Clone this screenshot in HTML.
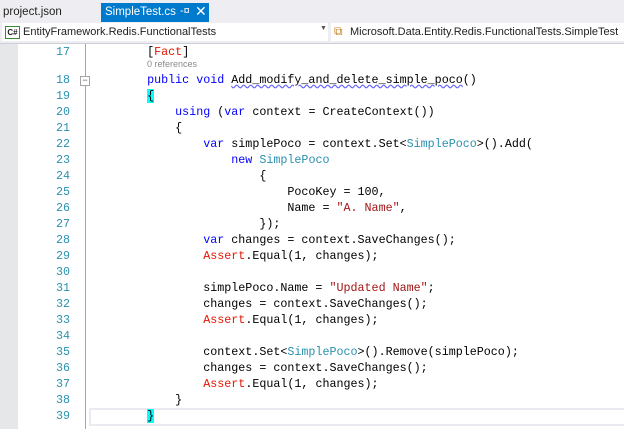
<!DOCTYPE html>
<html><head><style>
body{margin:0;width:624px;height:429px;overflow:hidden;background:#fff;font-family:"Liberation Sans",sans-serif;position:relative}
.tabs{position:absolute;left:0;top:0;width:624px;height:22px;background:#eeeef2}
.tab1{position:absolute;left:3px;top:6px;font-size:11.5px;color:#1e1e1e}
.tab2{position:absolute;left:101px;top:3px;width:108px;height:19px;background:#007acc;color:#fff;font-size:11.5px}
.nav{position:absolute;left:0;top:22px;width:624px;height:21px;background:#eeeef2;border-bottom:1px solid #ccced8}
.box{position:absolute;top:1px;height:18px;background:#fff;font-size:11px;color:#1e1e1e}
.gut{position:absolute;left:0;top:44px;width:18px;height:385px;background:#e6e7e8}
.vl{position:absolute;left:85px;top:44px;width:1px;height:385px;background:#a5a5a5}
.ln{position:absolute;left:30px;width:40px;text-align:right;font:11.7px "Liberation Mono",monospace;color:#2b91af;line-height:16px}
.c{position:absolute;left:91px;font:11.7px "Liberation Mono",monospace;color:#000;line-height:16px;white-space:pre}
.k{color:#0000ff}.t{color:#2b91af}.r{color:#e51400}.s{color:#a31515}
.cur{position:absolute;left:89px;top:408px;width:540px;height:14px;border:2px solid #eaeaf2}
</style></head><body>
<div class="tabs">
<div class="tab1">project.json</div>
<div class="tab2"><span style="position:absolute;left:4px;top:3px">SimpleTest.cs</span><span style="position:absolute;left:79px;top:2px;font-size:11px">-¤</span><span style="position:absolute;left:94px;top:0px;font-size:14px">✕</span></div>
</div>
<div class="nav">
<div class="box" style="left:2px;width:326px"><span style="position:absolute;left:3px;top:3px;width:13px;height:11px;border:1px solid #388a34;font-size:8px;line-height:11px;text-align:center;font-weight:bold">C#</span><span style="position:absolute;left:21px;top:3px">EntityFramework.Redis.FunctionalTests</span><span style="position:absolute;left:318px;top:2px;font-size:7px;color:#555">▼</span></div>
<div class="box" style="left:331px;width:293px"><span style="position:absolute;left:3px;top:1px;color:#c57d1f;font-size:12px">⧉</span><span style="position:absolute;left:19px;top:3px">Microsoft.Data.Entity.Redis.FunctionalTests.SimpleTest</span></div>
</div>
<div class="gut"></div>
<div class="vl"></div>
<div class="cur"></div>
<div class="ln" style="top:44px">17</div>
<div class="c" style="top:44px">        [<span class="r">Fact</span>]</div>
<div class="c" style="top:59px;left:147px;font:9px 'Liberation Sans',sans-serif;color:#8a8a8a">0 references</div>
<div style="position:absolute;left:80px;top:76px;width:8px;height:8px;border:1px solid #a5a5a5;background:#fff;font-size:9px;line-height:7px;text-align:center;color:#555">−</div>
<div class="ln" style="top:72px;line-height:16px">18<br>19<br>20<br>21<br>22<br>23<br>24<br>25<br>26<br>27<br>28<br>29<br>30<br>31<br>32<br>33<br>34<br>35<br>36<br>37<br>38<br>39</div>
<div class="c" style="top:72px">        <span class="k">public void</span> <span style="text-decoration:underline wavy #6464ff">Add_modify_and_delete_simple_poco</span>()
        <span style="background:#00ffff">{</span>
            <span class="k">using</span> (<span class="k">var</span> context = CreateContext())
            {
                <span class="k">var</span> simplePoco = context.Set&lt;<span class="t">SimplePoco</span>&gt;().Add(
                    <span class="k">new</span> <span class="t">SimplePoco</span>
                        {
                            PocoKey = 100,
                            Name = <span class="s">"A. Name"</span>,
                        });
                <span class="k">var</span> changes = context.SaveChanges();
                <span class="r">Assert</span>.Equal(1, changes);

                simplePoco.Name = <span class="s">"Updated Name"</span>;
                changes = context.SaveChanges();
                <span class="r">Assert</span>.Equal(1, changes);

                context.Set&lt;<span class="t">SimplePoco</span>&gt;().Remove(simplePoco);
                changes = context.SaveChanges();
                <span class="r">Assert</span>.Equal(1, changes);
            }
        <span style="background:#00ffff">}</span></div>
</body></html>
